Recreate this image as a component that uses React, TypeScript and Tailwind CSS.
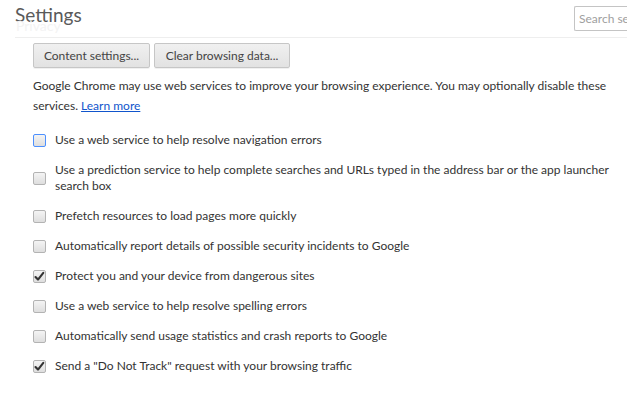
import React from "react";

const items: { label: React.ReactNode; checked: boolean; focus?: boolean; two?: boolean }[] = [
  { label: "Use a web service to help resolve navigation errors", checked: false, focus: true },
  {
    label: "Use a prediction service to help complete searches and URLs typed in the address bar or the app launcher search box",
    checked: false,
    two: true,
  },
  { label: "Prefetch resources to load pages more quickly", checked: false },
  { label: "Automatically report details of possible security incidents to Google", checked: false },
  { label: "Protect you and your device from dangerous sites", checked: true },
  { label: "Use a web service to help resolve spelling errors", checked: false },
  { label: "Automatically send usage statistics and crash reports to Google", checked: false },
  { label: 'Send a "Do Not Track" request with your browsing traffic', checked: true },
];

function Box({ checked, focus }: { checked: boolean; focus?: boolean }) {
  return (
    <div
      className={
        "relative w-[13px] h-[13px] shrink-0 rounded-[2px] border bg-gradient-to-b from-[#f4f4f4] to-[#dedede] " +
        (focus ? "border-[#4d90fe]" : "border-[#b3b3b3]")
      }
    >
      {checked && (
        <svg viewBox="0 0 13 13" className="absolute left-[-1px] top-[-1px] w-[13px] h-[13px]">
          <path d="M2.5 7 L5 9.6 L10.3 2.8" fill="none" stroke="#333" strokeWidth="2.1" strokeLinecap="round" strokeLinejoin="round" />
        </svg>
      )}
    </div>
  );
}

export default function App() {
  return (
    <div className="w-[627px] h-[400px] bg-white overflow-hidden text-[#333] text-[12px]" style={{ fontFamily: 'Lato, "Noto Sans", sans-serif' }}>
      <div className="flex items-start justify-between ml-[15px] h-[38px] border-b border-[#eeeeee]">
        <div className="relative pt-[2px]">
          <div className="text-[19px] leading-[26px] text-[#5a5a5a]">Settings</div>
          <div className="absolute left-[1px] top-[18px] text-[14px] leading-[16px] text-[#f3f3f3]">Privacy</div>
        </div>
        <div className="mt-[6px] w-[53px] h-[25px] border border-[#c4c4c4] rounded-l-[2px] border-r-0 pl-[4px] flex items-center text-[#a0a0a0] overflow-hidden whitespace-nowrap">
          Search settings
        </div>
      </div>
      <div className="pl-[33px] pr-[10px]">
        <div className="flex gap-[4px] mt-[5px]">
          <button className="h-[25px] w-[117px] border border-[#c6c6c6] rounded-[2px] bg-gradient-to-b from-[#f0f0f0] to-[#e2e2e2] text-[#444] text-[12px] shadow-[0_1px_0_rgba(0,0,0,0.06)]">
            Content settings...
          </button>
          <button className="h-[25px] w-[136px] border border-[#c6c6c6] rounded-[2px] bg-gradient-to-b from-[#f0f0f0] to-[#e2e2e2] text-[#444] text-[12px] shadow-[0_1px_0_rgba(0,0,0,0.06)]">
            Clear browsing data...
          </button>
        </div>
        <p className="mt-[8px] leading-[20px]">
          Google Chrome may use web services to improve your browsing experience. You may optionally disable these services.{" "}
          <span className="text-[#1155cc] underline">Learn more</span>
        </p>
        <div className="mt-[9px] flex flex-col">
          {items.map((it, i) => (
            <div key={i} className={"flex items-center gap-[9px] " + (it.two ? "h-[46px]" : "h-[30px]")}>
              <Box checked={it.checked} focus={it.focus} />
              <span className={"leading-[16px] " + (it.two ? "pr-[6px]" : "")}>{it.label}</span>
            </div>
          ))}
        </div>
      </div>
    </div>
  );
}
